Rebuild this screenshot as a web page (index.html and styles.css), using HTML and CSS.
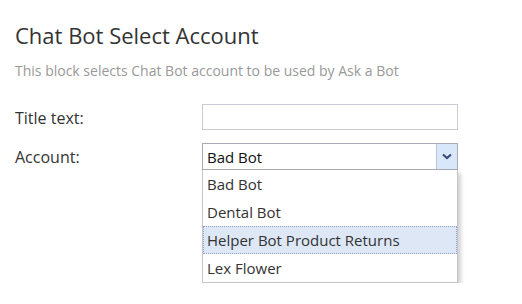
FILE: index.html
```html
<!DOCTYPE html>
<html lang="en">
<head>
    <meta charset="UTF-8">
    <title>Chat Bot Select Account</title>
    <link rel="stylesheet" href="styles.css">
</head>
<body>
    <div class="block">
        <h1>Chat Bot Select Account</h1>
        <p class="desc">This block selects Chat Bot account to be used by Ask a Bot</p>

        <div class="form">
            <div class="label">Title text:</div>
            <div class="input"></div>

            <div class="label">Account:</div>
            <div class="select-wrap">
                <div class="select">
                    <span class="select-value">Bad Bot</span>
                    <span class="select-btn">
                        <svg width="10" height="7" viewBox="0 0 10 7">
                            <path d="M1 1.5 L5 5 L9 1.5" fill="none" stroke="#3b4d7a" stroke-width="2.2"/>
                        </svg>
                    </span>
                </div>
                <div class="dropdown">
                    <div class="item">Bad Bot</div>
                    <div class="item">Dental Bot</div>
                    <div class="item item-active">Helper Bot Product Returns</div>
                    <div class="item">Lex Flower</div>
                </div>
            </div>
        </div>
    </div>
</body>
</html>
```

FILE: styles.css
```css
body {
    margin: 0;
    background: #fff;
    font-family: "Open Sans", sans-serif;
    color: #333;
}
.block {
    padding: 20px 15px 0 15px;
}
h1 {
    margin: 0;
    font-size: 22px;
    font-weight: normal;
    color: #333;
}
.desc {
    margin: 11px 0 0 0;
    font-size: 14px;
    color: #999;
}
.form {
    display: grid;
    grid-template-columns: 187px 256px;
    row-gap: 13px;
    align-items: start;
    margin-top: 24px;
}
.label {
    padding-top: 3px;
    font-size: 16px;
    color: #333;
}
.input {
    height: 24px;
    border: 1px solid #cacad8;
    background: #fff;
}
.select-wrap {
    display: flex;
    flex-direction: column;
}
.select {
    display: flex;
    align-items: center;
    height: 25px;
    border: 1px solid #a9a9b8;
    background: #fff;
}
.select-value {
    flex: 1;
    padding-left: 4px;
    font-size: 15px;
    color: #111;
}
.select-btn {
    display: flex;
    align-items: center;
    justify-content: center;
    width: 20px;
    height: 25px;
    border-left: 1px solid #b8c4d8;
    background: #d8e7fa;
}
.dropdown {
    background: #fff;
    border: 1px solid #c4c4cc;
    border-top: none;
    box-shadow: 3px 3px 4px rgba(0, 0, 0, 0.18);
}
.item {
    height: 28px;
    line-height: 28px;
    padding-left: 4px;
    font-size: 15px;
    color: #333;
    box-sizing: border-box;
}
.item-active {
    background: #dde7f6;
    border: 1px dotted #8fa3cc;
    line-height: 26px;
    padding-left: 3px;
}
```
